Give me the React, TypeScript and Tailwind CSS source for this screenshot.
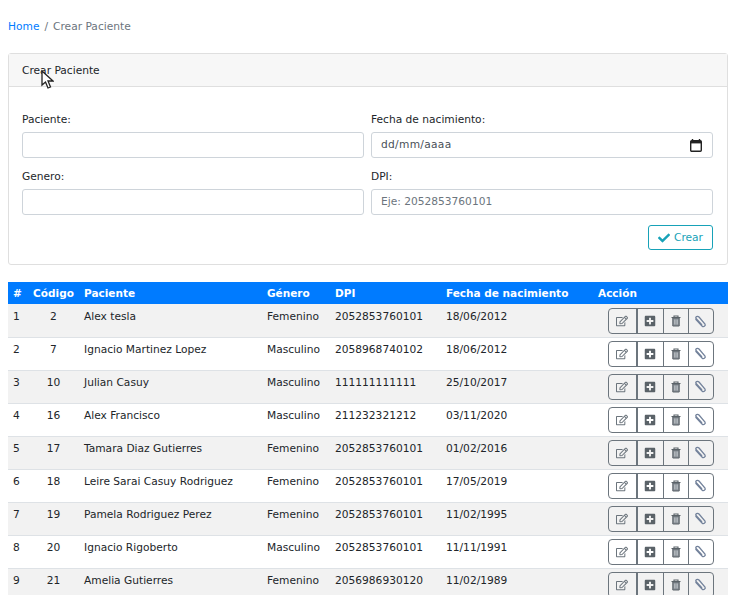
import { FaCheck, FaPlusSquare, FaRegEdit } from "react-icons/fa";

const pacientes = [
  { n: 1, codigo: 2, nombre: "Alex tesla", genero: "Femenino", dpi: "2052853760101", fecha: "18/06/2012" },
  { n: 2, codigo: 7, nombre: "Ignacio Martinez Lopez", genero: "Masculino", dpi: "2058968740102", fecha: "18/06/2012" },
  { n: 3, codigo: 10, nombre: "Julian Casuy", genero: "Masculino", dpi: "111111111111", fecha: "25/10/2017" },
  { n: 4, codigo: 16, nombre: "Alex Francisco", genero: "Masculino", dpi: "211232321212", fecha: "03/11/2020" },
  { n: 5, codigo: 17, nombre: "Tamara Diaz Gutierres", genero: "Femenino", dpi: "2052853760101", fecha: "01/02/2016" },
  { n: 6, codigo: 18, nombre: "Leire Sarai Casuy Rodriguez", genero: "Femenino", dpi: "2052853760101", fecha: "17/05/2019" },
  { n: 7, codigo: 19, nombre: "Pamela Rodriguez Perez", genero: "Femenino", dpi: "2052853760101", fecha: "11/02/1995" },
  { n: 8, codigo: 20, nombre: "Ignacio Rigoberto", genero: "Masculino", dpi: "2052853760101", fecha: "11/11/1991" },
  { n: 9, codigo: 21, nombre: "Amelia Gutierres", genero: "Femenino", dpi: "2056986930120", fecha: "11/02/1989" },
];

function Field({ label, placeholder, date }: { label: string; placeholder?: string; date?: boolean }) {
  return (
    <div className="flex-1">
      <label className="mb-[3px] block h-[19px] leading-[19px] text-[#212529]">{label}</label>
      <div className="flex h-[26px] items-center justify-between rounded-[3px] border border-[#ced4da] bg-white pl-[9px] pr-[10px] text-[#6c757d]">
        <span className={date ? "tracking-[0.3px] text-[#495057]" : ""}>{placeholder}</span>
        {date && (
          <svg className="h-[13px] w-[12px]" viewBox="0 0 12 13">
            <path d="M2.5 0v2M9.5 0v2" stroke="#222" strokeWidth="1.4" />
            <rect x="0.7" y="1.7" width="10.6" height="10.6" rx="1" fill="none" stroke="#222" strokeWidth="1.4" />
            <rect x="1" y="2" width="10" height="2.4" fill="#222" />
          </svg>
        )}
      </div>
    </div>
  );
}

function Acciones() {
  const btn = "flex h-full items-center justify-center border-l border-[#6c757d] text-[#6c757d]";
  return (
    <div className="flex h-[26px] w-[106px] overflow-hidden rounded-[4px] border border-[#6c757d]">
      <span className="flex h-full w-[27px] items-center justify-center pr-[1px] text-[#6c757d]">
        <FaRegEdit className="text-[12px]" />
      </span>
      <span className={`${btn} w-[27px] border-l-2 pr-[2px]`}>
        <FaPlusSquare className="text-[12px] text-[#5a6268]" />
      </span>
      <span className={`${btn} w-[25px] pr-[1px]`}>
        <svg className="h-[12px] w-[10px]" viewBox="0 0 10 12">
          <path d="M0.5 2.5h9M3 2.5V1h4v1.5" fill="none" stroke="#5a6268" strokeWidth="1.1" />
          <path d="M1.8 3v8h6.4V3z" fill="#858c93" stroke="#5a6268" strokeWidth="1" />
          <path d="M3.6 4.5v5M5 4.5v5M6.4 4.5v5" stroke="#d5d8db" strokeWidth="0.6" />
        </svg>
      </span>
      <span className={`${btn} flex-1 pr-[1px]`}>
        <svg className="h-[13px] w-[13px]" viewBox="0 0 13 13">
          <path
            d="M1.5 4 L8 11 C9.5 12.5 12 11 11 9 L5 2 C3.5 0.5 1 2 2 3.5 L8 10"
            fill="none"
            stroke="#73829b"
            strokeWidth="1.3"
          />
        </svg>
      </span>
    </div>
  );
}

export default function App() {
  return (
    <div className="relative h-[595px] overflow-hidden bg-white pl-2 pr-[9px] text-[10.65px] text-[#212529] [font-family:'DejaVu_Sans',sans-serif]">
      <nav className="flex h-[53px] items-center pt-[1px] text-[#6c757d]">
        <a className="text-[#007bff]">Home</a>
        <span className="px-[5px]">/</span>
        <span>Crear Paciente</span>
      </nav>

      <div className="rounded-[3px] border border-[#dfdfdf]">
        <div className="flex h-[33px] items-center border-b border-[#dfdfdf] bg-[#f7f7f7] pl-[13px] pt-[1px]">Crear Paciente</div>
        <div className="pl-[13px] pr-[14px] pt-[23px]">
          <div className="flex gap-[7px]">
            <Field label="Paciente:" />
            <Field label="Fecha de nacimiento:" placeholder="dd/mm/aaaa" date />
          </div>
          <div className="mt-[9px] flex gap-[7px]">
            <Field label="Genero:" />
            <Field label="DPI:" placeholder="Eje: 2052853760101" />
          </div>
          <div className="mt-[10px] flex justify-end pb-[14px]">
            <button className="flex h-[25px] w-[65px] items-center justify-center gap-[4px] rounded-[3px] border border-[#17a2b8] text-[#17a2b8]">
              <FaCheck className="text-[12px]" /> Crear
            </button>
          </div>
        </div>
      </div>

      <table className="mt-[17px] w-full table-fixed border-collapse">
        <colgroup>
          <col className="w-[20px]" />
          <col className="w-[51px]" />
          <col className="w-[183px]" />
          <col className="w-[68px]" />
          <col className="w-[111px]" />
          <col className="w-[152px]" />
          <col />
        </colgroup>
        <thead>
          <tr className="h-[22px] bg-[#007bff] text-left text-[10.5px] font-bold text-white">
            <th className="pl-[5px] pt-[2px]">#</th>
            <th className="pt-[2px] text-center">Código</th>
            <th className="pl-[5px] pt-[2px]">Paciente</th>
            <th className="pl-[5px] pt-[2px]">Género</th>
            <th className="pl-[5px] pt-[2px]">DPI</th>
            <th className="pl-[5px] pt-[2px]">Fecha de nacimiento</th>
            <th className="pl-[5px] pt-[2px]">Acción</th>
          </tr>
        </thead>
        <tbody>
          {pacientes.map((p) => (
            <tr key={p.n} className="group h-[33px] border-b border-[#dee2e6] align-top odd:bg-[#f2f2f2]">
              <td className="pl-[5px] pt-[4px] group-first:pt-[5px]">{p.n}</td>
              <td className="pt-[4px] text-center group-first:pt-[5px]">{p.codigo}</td>
              <td className="pl-[5px] pt-[4px] whitespace-nowrap group-first:pt-[5px]">{p.nombre}</td>
              <td className="pl-[5px] pt-[4px] group-first:pt-[5px]">{p.genero}</td>
              <td className="pl-[5px] pt-[4px] group-first:pt-[5px]">{p.dpi}</td>
              <td className="pl-[5px] pt-[4px] group-first:pt-[5px]">{p.fecha}</td>
              <td className="pl-[15px] pt-[3px] group-first:pt-[4px]">
                <Acciones />
              </td>
            </tr>
          ))}
        </tbody>
      </table>

      {/* puntero del mouse sobre el titulo de la card */}
      <svg className="absolute left-[41px] top-[70px] h-[19px] w-[13px]" viewBox="0 0 13 19">
        <path d="M1 1v14l3.5-3 2.5 6 2.5-1-2.5-6H12z" fill="#fff" stroke="#222" strokeWidth="1.3" />
      </svg>
    </div>
  );
}
